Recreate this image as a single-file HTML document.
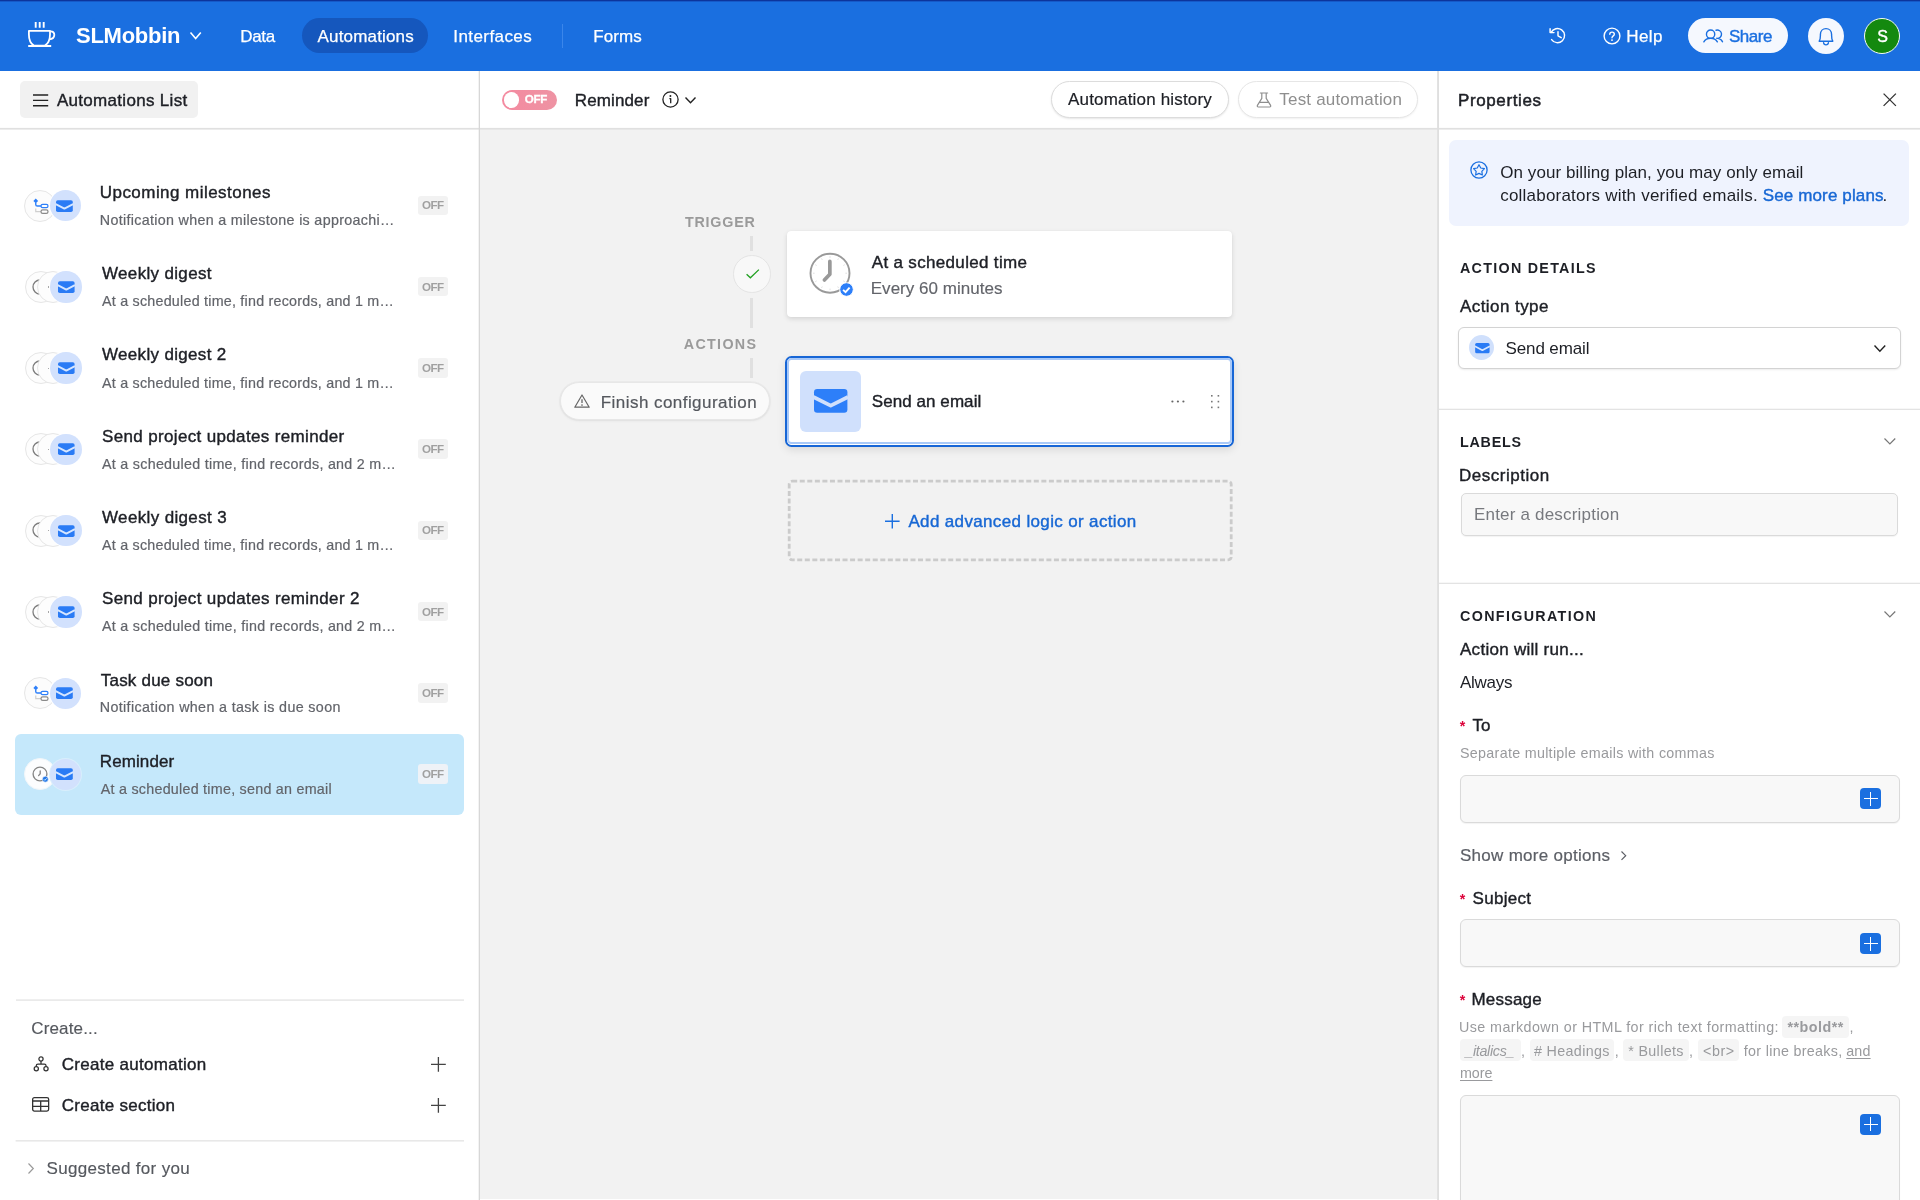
<!DOCTYPE html>
<html>
<head>
<meta charset="utf-8">
<title>Airtable - Automations</title>
<style>
*{box-sizing:border-box;margin:0;padding:0}
html,body{width:1920px;height:1200px;overflow:hidden;background:#fff}
body{font-family:"Liberation Sans",sans-serif;color:#1d1f25;position:relative;font-size:17px}
.a{position:absolute}
.t{position:absolute;white-space:nowrap;line-height:1}
svg{position:absolute;overflow:visible}
/* ===== top bar ===== */
#top{left:0;top:0;width:1920px;height:71px;background:#1a6fe0;border-top:1px solid #0c349c;box-shadow:inset 0 1px 0 #1559c8}
#tab-act{left:301.8px;top:17.8px;width:126.5px;height:35.4px;border-radius:18px;background:#1557bd}
#topdiv{left:562px;top:24px;width:1px;height:24px;background:#3b86ea}
#share{left:1687.6px;top:17.6px;width:100.5px;height:35.6px;border-radius:18px;background:#f5f8fe}
#bell{left:1808px;top:17.6px;width:36px;height:36px;border-radius:18px;background:#f5f8fe}
#avatar{left:1864px;top:17.6px;width:36px;height:36px;border-radius:18px;background:#14890f;border:1.8px solid #f4fbf4}
/* ===== sub bar ===== */
#sub{left:0;top:71px;width:1920px;height:59px;background:#fff}
#vl1{left:478px;top:71px;width:2px;height:1129px;background:#dedede}
#vl2{left:1437px;top:71px;width:2px;height:1129px;background:#dedede}
#listbtn{left:20px;top:81px;width:178px;height:37px;border-radius:5px;background:#f1f1f1}
#toggle{left:501.8px;top:89.8px;width:55.6px;height:20px;border-radius:10px;background:linear-gradient(90deg,#f48aa0,#ee93a3)}
#knob{left:503.9px;top:92px;width:15.6px;height:15.6px;border-radius:8px;background:#fff}
.pill{position:absolute;height:37px;border-radius:19px;background:#fff;border:1px solid #dcdcdc;box-shadow:0 1px 2px rgba(0,0,0,.10)}
/* ===== center ===== */
#center{left:480px;top:129px;width:957px;height:1070px;background:#f2f2f2}
/* ===== right ===== */
#right{left:1439px;top:129px;width:481px;height:1070px;background:#fff}
.hr{position:absolute;left:1439px;width:481px;height:1.4px;background:#e4e4e4}
.inp{position:absolute;background:#f8f8f8;border:1px solid #dadada;border-radius:5px;box-shadow:0 1px 1px rgba(0,0,0,.05)}
.plus{position:absolute;width:21px;height:21px;border-radius:4px;background:#1a6fe0}
.plus:before{content:"";position:absolute;left:9.9px;top:3.5px;width:1.2px;height:14px;background:#fff}
.plus:after{content:"";position:absolute;left:3.5px;top:9.9px;width:14px;height:1.2px;background:#fff}
.code{background:#f3f3f3;border-radius:4px;padding:3px 5px}
</style>
</head>
<body>
<!-- TOP BAR -->
<div class="a" id="top"></div>
<div class="a" id="tab-act"></div>
<div class="a" id="topdiv"></div>
<div class="a" id="share"></div>
<div class="a" id="bell"></div>
<div class="a" id="avatar"></div>
<!-- SUB BAR -->
<div class="a" id="sub"></div>
<div class="a" id="listbtn"></div>
<div class="a" id="toggle"></div>
<div class="a" id="knob"></div>
<div class="pill" style="left:1051px;top:81px;width:178px"></div>
<div class="pill" style="left:1238px;top:81px;width:180px;border-color:#e6e6e6;box-shadow:0 1px 2px rgba(0,0,0,.06)"></div>
<!-- CENTER -->
<div class="a" id="center"></div>
<!-- RIGHT -->
<div class="a" id="right"></div>
<svg style="left:0;top:0" width="1920" height="1200" viewBox="0 0 1920 1200">
<rect x="0" y="127.9" width="1920" height="1.7" fill="#e0e0e0"/>
<rect x="478.7" y="71" width="1.3" height="1129" fill="#d7d7d7"/>
<rect x="1437.1" y="71" width="1.9" height="1129" fill="#dfdfdf"/>
<rect x="1439" y="408.7" width="481" height="1.3" fill="#e3e3e3"/>
<rect x="1439" y="582.7" width="481" height="1.3" fill="#e3e3e3"/>
<rect x="16" y="999.3" width="448" height="1.6" fill="#e8e8e8"/>
<rect x="15.6" y="1140" width="448.4" height="1.6" fill="#e8e8e8"/>
</svg>
<div class="a" style="left:15px;top:734px;width:448.5px;height:81px;border-radius:6px;background:#c5e8fb"></div>
<div class="a" style="left:418px;top:195.70px;width:30px;height:19.5px;border-radius:3px;background:#f2f2f2"></div>
<div class="a" style="left:24.20px;top:189.60px;width:32px;height:32px;border-radius:50%;background:#fcfcfc;border:1.2px solid #e6e6e6"></div>
<svg style="left:33px;top:197.6px" width="16" height="16" viewBox="0 0 16 16"><path d="M2.75 0.5 L5.15 2.9 L2.75 5.3 L0.35 2.9 Z" fill="#2d7ff9"/><path d="M2.75 4.6 V6.4 Q2.75 8 4.4 8 H8" fill="none" stroke="#2d7ff9" stroke-width="1.4"/><rect x="8" y="6.3" width="7" height="3.4" rx="1.7" fill="#fff" stroke="#2d7ff9" stroke-width="1.2"/><path d="M2.75 10.4 V13.6 H8" fill="none" stroke="#cfcfcf" stroke-width="1.2"/><rect x="8" y="11.9" width="7" height="3.5" rx="1.7" fill="#fff" stroke="#8a8a8a" stroke-width="1.2"/></svg>
<div class="a" style="left:48.60px;top:188.90px;width:33.4px;height:33.4px;border-radius:50%;background:#fff;border:none"></div>
<div class="a" style="left:49.70px;top:190.00px;width:31.2px;height:31.2px;border-radius:50%;background:#d2e1fd;border:none"></div>
<svg style="left:56.2px;top:199.5px" width="16.8" height="12.3" viewBox="0 0 17 12"><rect x="0" y="0" width="17" height="12" rx="1.8" fill="#2a7bf5"/><path d="M-0.3 3.9 L8.5 8.5 L17.3 3.9" fill="none" stroke="#d6e6ff" stroke-width="1.95" stroke-linejoin="round"/></svg>
<div class="a" style="left:418px;top:276.95px;width:30px;height:19.5px;border-radius:3px;background:#f2f2f2"></div>
<div class="a" style="left:24.60px;top:270.85px;width:32px;height:32px;border-radius:50%;background:#fdfdfd;border:1.2px solid #e6e6e6"></div>
<svg style="left:32.4px;top:278.55px" width="16" height="16" viewBox="0 0 16 16"><circle cx="8" cy="8" r="7" fill="none" stroke="#7d7d7d" stroke-width="1.3"/></svg>
<div class="a" style="left:37.30px;top:270.85px;width:32px;height:32px;border-radius:50%;background:#fdfdfd;border:1.2px solid #e6e6e6"></div>
<div class="a" style="left:48px;top:286.25px;width:2px;height:1.4px;background:#a8a8a8"></div>
<div class="a" style="left:49.20px;top:270.05px;width:33.6px;height:33.6px;border-radius:50%;background:#fff;border:none"></div>
<div class="a" style="left:50.30px;top:271.15px;width:31.4px;height:31.4px;border-radius:50%;background:#d2e1fd;border:none"></div>
<svg style="left:57.6px;top:280.75px" width="16.6" height="12.3" viewBox="0 0 17 12"><rect x="0" y="0" width="17" height="12" rx="1.8" fill="#2a7bf5"/><path d="M-0.3 3.9 L8.5 8.5 L17.3 3.9" fill="none" stroke="#d6e6ff" stroke-width="1.95" stroke-linejoin="round"/></svg>
<div class="a" style="left:418px;top:358.20px;width:30px;height:19.5px;border-radius:3px;background:#f2f2f2"></div>
<div class="a" style="left:24.60px;top:352.10px;width:32px;height:32px;border-radius:50%;background:#fdfdfd;border:1.2px solid #e6e6e6"></div>
<svg style="left:32.4px;top:359.8px" width="16" height="16" viewBox="0 0 16 16"><circle cx="8" cy="8" r="7" fill="none" stroke="#7d7d7d" stroke-width="1.3"/></svg>
<div class="a" style="left:37.30px;top:352.10px;width:32px;height:32px;border-radius:50%;background:#fdfdfd;border:1.2px solid #e6e6e6"></div>
<div class="a" style="left:48px;top:367.50px;width:2px;height:1.4px;background:#a8a8a8"></div>
<div class="a" style="left:49.20px;top:351.30px;width:33.6px;height:33.6px;border-radius:50%;background:#fff;border:none"></div>
<div class="a" style="left:50.30px;top:352.40px;width:31.4px;height:31.4px;border-radius:50%;background:#d2e1fd;border:none"></div>
<svg style="left:57.6px;top:362px" width="16.6" height="12.3" viewBox="0 0 17 12"><rect x="0" y="0" width="17" height="12" rx="1.8" fill="#2a7bf5"/><path d="M-0.3 3.9 L8.5 8.5 L17.3 3.9" fill="none" stroke="#d6e6ff" stroke-width="1.95" stroke-linejoin="round"/></svg>
<div class="a" style="left:418px;top:439.45px;width:30px;height:19.5px;border-radius:3px;background:#f2f2f2"></div>
<div class="a" style="left:24.60px;top:433.35px;width:32px;height:32px;border-radius:50%;background:#fdfdfd;border:1.2px solid #e6e6e6"></div>
<svg style="left:32.4px;top:441.05px" width="16" height="16" viewBox="0 0 16 16"><circle cx="8" cy="8" r="7" fill="none" stroke="#7d7d7d" stroke-width="1.3"/></svg>
<div class="a" style="left:37.30px;top:433.35px;width:32px;height:32px;border-radius:50%;background:#fdfdfd;border:1.2px solid #e6e6e6"></div>
<div class="a" style="left:48px;top:448.75px;width:2px;height:1.4px;background:#a8a8a8"></div>
<div class="a" style="left:49.20px;top:432.55px;width:33.6px;height:33.6px;border-radius:50%;background:#fff;border:none"></div>
<div class="a" style="left:50.30px;top:433.65px;width:31.4px;height:31.4px;border-radius:50%;background:#d2e1fd;border:none"></div>
<svg style="left:57.6px;top:443.25px" width="16.6" height="12.3" viewBox="0 0 17 12"><rect x="0" y="0" width="17" height="12" rx="1.8" fill="#2a7bf5"/><path d="M-0.3 3.9 L8.5 8.5 L17.3 3.9" fill="none" stroke="#d6e6ff" stroke-width="1.95" stroke-linejoin="round"/></svg>
<div class="a" style="left:418px;top:520.70px;width:30px;height:19.5px;border-radius:3px;background:#f2f2f2"></div>
<div class="a" style="left:24.60px;top:514.60px;width:32px;height:32px;border-radius:50%;background:#fdfdfd;border:1.2px solid #e6e6e6"></div>
<svg style="left:32.4px;top:522.3px" width="16" height="16" viewBox="0 0 16 16"><circle cx="8" cy="8" r="7" fill="none" stroke="#7d7d7d" stroke-width="1.3"/></svg>
<div class="a" style="left:37.30px;top:514.60px;width:32px;height:32px;border-radius:50%;background:#fdfdfd;border:1.2px solid #e6e6e6"></div>
<div class="a" style="left:48px;top:530.00px;width:2px;height:1.4px;background:#a8a8a8"></div>
<div class="a" style="left:49.20px;top:513.80px;width:33.6px;height:33.6px;border-radius:50%;background:#fff;border:none"></div>
<div class="a" style="left:50.30px;top:514.90px;width:31.4px;height:31.4px;border-radius:50%;background:#d2e1fd;border:none"></div>
<svg style="left:57.6px;top:524.5px" width="16.6" height="12.3" viewBox="0 0 17 12"><rect x="0" y="0" width="17" height="12" rx="1.8" fill="#2a7bf5"/><path d="M-0.3 3.9 L8.5 8.5 L17.3 3.9" fill="none" stroke="#d6e6ff" stroke-width="1.95" stroke-linejoin="round"/></svg>
<div class="a" style="left:418px;top:601.95px;width:30px;height:19.5px;border-radius:3px;background:#f2f2f2"></div>
<div class="a" style="left:24.60px;top:595.85px;width:32px;height:32px;border-radius:50%;background:#fdfdfd;border:1.2px solid #e6e6e6"></div>
<svg style="left:32.4px;top:603.55px" width="16" height="16" viewBox="0 0 16 16"><circle cx="8" cy="8" r="7" fill="none" stroke="#7d7d7d" stroke-width="1.3"/></svg>
<div class="a" style="left:37.30px;top:595.85px;width:32px;height:32px;border-radius:50%;background:#fdfdfd;border:1.2px solid #e6e6e6"></div>
<div class="a" style="left:48px;top:611.25px;width:2px;height:1.4px;background:#a8a8a8"></div>
<div class="a" style="left:49.20px;top:595.05px;width:33.6px;height:33.6px;border-radius:50%;background:#fff;border:none"></div>
<div class="a" style="left:50.30px;top:596.15px;width:31.4px;height:31.4px;border-radius:50%;background:#d2e1fd;border:none"></div>
<svg style="left:57.6px;top:605.75px" width="16.6" height="12.3" viewBox="0 0 17 12"><rect x="0" y="0" width="17" height="12" rx="1.8" fill="#2a7bf5"/><path d="M-0.3 3.9 L8.5 8.5 L17.3 3.9" fill="none" stroke="#d6e6ff" stroke-width="1.95" stroke-linejoin="round"/></svg>
<div class="a" style="left:418px;top:683.20px;width:30px;height:19.5px;border-radius:3px;background:#f2f2f2"></div>
<div class="a" style="left:24.20px;top:677.10px;width:32px;height:32px;border-radius:50%;background:#fcfcfc;border:1.2px solid #e6e6e6"></div>
<svg style="left:33px;top:685.1px" width="16" height="16" viewBox="0 0 16 16"><path d="M2.75 0.5 L5.15 2.9 L2.75 5.3 L0.35 2.9 Z" fill="#2d7ff9"/><path d="M2.75 4.6 V6.4 Q2.75 8 4.4 8 H8" fill="none" stroke="#2d7ff9" stroke-width="1.4"/><rect x="8" y="6.3" width="7" height="3.4" rx="1.7" fill="#fff" stroke="#2d7ff9" stroke-width="1.2"/><path d="M2.75 10.4 V13.6 H8" fill="none" stroke="#cfcfcf" stroke-width="1.2"/><rect x="8" y="11.9" width="7" height="3.5" rx="1.7" fill="#fff" stroke="#8a8a8a" stroke-width="1.2"/></svg>
<div class="a" style="left:48.60px;top:676.40px;width:33.4px;height:33.4px;border-radius:50%;background:#fff;border:none"></div>
<div class="a" style="left:49.70px;top:677.50px;width:31.2px;height:31.2px;border-radius:50%;background:#d2e1fd;border:none"></div>
<svg style="left:56.2px;top:687px" width="16.8" height="12.3" viewBox="0 0 17 12"><rect x="0" y="0" width="17" height="12" rx="1.8" fill="#2a7bf5"/><path d="M-0.3 3.9 L8.5 8.5 L17.3 3.9" fill="none" stroke="#d6e6ff" stroke-width="1.95" stroke-linejoin="round"/></svg>
<div class="a" style="left:418px;top:764.45px;width:30px;height:19.5px;border-radius:3px;background:#eef2f7"></div>
<div class="a" style="left:24.20px;top:758.35px;width:32px;height:32px;border-radius:50%;background:#fcfdfe;border:1px solid #f1f6fa"></div>
<svg style="left:32.05px;top:766px" width="16" height="16" viewBox="0 0 16 16"><circle cx="8" cy="8" r="6.9" fill="none" stroke="#858585" stroke-width="1.35"/><path d="M8.2 5 V7.8 L6.6 9.6" fill="none" stroke="#858585" stroke-width="1.3" stroke-linecap="round" stroke-linejoin="round"/><circle cx="13.3" cy="13.2" r="3" fill="#2478e8" stroke="#fcfdfe" stroke-width="0.6"/><path d="M11.9 13.3 L12.9 14.3 L14.7 12.3" fill="none" stroke="#bfe6ff" stroke-width="1"/></svg>
<div class="a" style="left:48.60px;top:757.65px;width:33.4px;height:33.4px;border-radius:50%;background:#d9eefc;border:none"></div>
<div class="a" style="left:49.70px;top:758.75px;width:31.2px;height:31.2px;border-radius:50%;background:#d2e1fd;border:none"></div>
<svg style="left:56.2px;top:768.25px" width="16.8" height="12.3" viewBox="0 0 17 12"><rect x="0" y="0" width="17" height="12" rx="1.8" fill="#2a7bf5"/><path d="M-0.3 3.9 L8.5 8.5 L17.3 3.9" fill="none" stroke="#d6e6ff" stroke-width="1.95" stroke-linejoin="round"/></svg>
<svg style="left:430.7px;top:1057px" width="14.8" height="14.8" viewBox="0 0 14.8 14.8"><path d="M7.4 0 V14.8 M0 7.4 H14.8" stroke="#444" stroke-width="1.3" fill="none"/></svg>
<svg style="left:430.7px;top:1097.6px" width="14.8" height="14.8" viewBox="0 0 14.8 14.8"><path d="M7.4 0 V14.8 M0 7.4 H14.8" stroke="#444" stroke-width="1.3" fill="none"/></svg>
<svg style="left:32.5px;top:1056.3px" width="16" height="16" viewBox="0 0 16 16"><circle cx="8" cy="3" r="2.1" fill="none" stroke="#333" stroke-width="1.25"/><circle cx="3.3" cy="12.7" r="2.1" fill="none" stroke="#333" stroke-width="1.25"/><circle cx="13" cy="12.7" r="2.1" fill="none" stroke="#333" stroke-width="1.25"/><path d="M8 5.1 V8 M3.3 10.6 V9.6 Q3.3 8 4.9 8 H11.4 Q13 8 13 9.6 V10.6" fill="none" stroke="#333" stroke-width="1.25"/></svg>
<svg style="left:32px;top:1097.3px" width="17.5" height="15" viewBox="0 0 17.5 15"><rect x="0.65" y="0.65" width="16" height="13.4" rx="1.7" fill="none" stroke="#333" stroke-width="1.3"/><path d="M0.65 4 H16.65 M0.65 9.4 H16.65 M8.7 4 V14" fill="none" stroke="#333" stroke-width="1.3"/></svg>
<svg style="left:27.5px;top:1163px" width="6" height="11" viewBox="0 0 6 11"><path d="M0.5 0.5 L5.3 5.5 L0.5 10.5" fill="none" stroke="#9a9a9a" stroke-width="1.2"/></svg>
<div class="a" style="left:749.5px;top:235.75px;width:3.75px;height:15.5px;background:#e0e0e0"></div>
<div class="a" style="left:749.5px;top:297.5px;width:3.75px;height:30px;background:#e0e0e0"></div>
<div class="a" style="left:749.5px;top:358px;width:3.75px;height:20px;background:#e0e0e0"></div>
<div class="a" style="left:733px;top:255px;width:37.5px;height:37.5px;border-radius:50%;background:#f8f8f8;border:1.5px solid #e4e4e4"></div>
<svg style="left:745.5px;top:269.3px" width="13.5" height="9.6" viewBox="0 0 13.5 9.6"><path d="M0.6 5.2 L4.4 8.8 L12.9 0.6" fill="none" stroke="#20a020" stroke-width="1.3"/></svg>
<div class="a" style="left:787px;top:231.2px;width:445px;height:86.3px;border-radius:4px;background:#fff;box-shadow:0 2px 5px rgba(0,0,0,.12),0 0 1px rgba(0,0,0,.08)"></div>
<svg style="left:809.4px;top:251.8px" width="42" height="42" viewBox="0 0 42 42"><circle cx="21" cy="21.2" r="19.5" fill="#fff" stroke="#999" stroke-width="1.9"/><path d="M21.00 5.80 L21.00 4.20" stroke="#e0e0e0" stroke-width="1"/><path d="M28.70 7.86 L29.50 6.48" stroke="#e0e0e0" stroke-width="1"/><path d="M34.34 13.50 L35.72 12.70" stroke="#e0e0e0" stroke-width="1"/><path d="M36.40 21.20 L38.00 21.20" stroke="#e0e0e0" stroke-width="1"/><path d="M34.34 28.90 L35.72 29.70" stroke="#e0e0e0" stroke-width="1"/><path d="M28.70 34.54 L29.50 35.92" stroke="#e0e0e0" stroke-width="1"/><path d="M21.00 36.60 L21.00 38.20" stroke="#e0e0e0" stroke-width="1"/><path d="M13.30 34.54 L12.50 35.92" stroke="#e0e0e0" stroke-width="1"/><path d="M7.66 28.90 L6.28 29.70" stroke="#e0e0e0" stroke-width="1"/><path d="M5.60 21.20 L4.00 21.20" stroke="#e0e0e0" stroke-width="1"/><path d="M7.66 13.50 L6.28 12.70" stroke="#e0e0e0" stroke-width="1"/><path d="M13.30 7.86 L12.50 6.48" stroke="#e0e0e0" stroke-width="1"/><path d="M20.85 9.4 V22.2 L15.4 28" fill="none" stroke="#999" stroke-width="3.7" stroke-linecap="round" stroke-linejoin="round"/></svg>
<svg style="left:839.25px;top:282px" width="15" height="15" viewBox="0 0 15 15"><circle cx="7.5" cy="7.5" r="6.8" fill="#2d7ff9" stroke="#fff" stroke-width="1"/><path d="M4.1 7.9 L6.5 10.1 L10.6 5.6" fill="none" stroke="#fff" stroke-width="1.9"/></svg>
<div class="a" style="left:560px;top:382.4px;width:210px;height:37.4px;border-radius:19px;background:#fafafa;border:1.5px solid #e7e7e7;box-shadow:0 0 0 1px rgba(0,0,0,.025),0 1px 3px rgba(0,0,0,.06)"></div>
<svg style="left:574.2px;top:394.3px" width="16" height="14" viewBox="0 0 16 14"><path d="M8 1 L15.2 13.2 H0.8 Z" fill="none" stroke="#666" stroke-width="1.2" stroke-linejoin="round"/><path d="M8 5.2 V9" stroke="#666" stroke-width="1.3"/><circle cx="8" cy="11" r="0.85" fill="#666"/></svg>
<div class="a" style="left:784.9px;top:355.5px;width:449.4px;height:91.2px;border-radius:6.5px;background:#fff;border:2.4px solid #1766d6;box-shadow:0 3px 8px rgba(0,0,0,.10)"></div><div class="a" style="left:787.3px;top:357.9px;width:444.6px;height:86.4px;border-radius:4.2px;border:2px solid #a9c9f8"></div>
<div class="a" style="left:800px;top:370.7px;width:61px;height:61px;border-radius:6px;background:#d0e0fc"></div>
<svg style="left:813.7px;top:389.2px" width="33.4" height="23.8" viewBox="0 0 33.4 23.8"><rect x="0" y="0" width="33.4" height="23.8" rx="3.2" fill="#2d7ff9"/><path d="M-0.6 8 L16.7 16.6 L34 8" fill="none" stroke="#d0e0fc" stroke-width="3.8" stroke-linejoin="round"/></svg>
<svg style="left:1171px;top:400px" width="14" height="3" viewBox="0 0 14 3"><circle cx="1.4" cy="1.5" r="1.1" fill="#666"/><circle cx="6.9" cy="1.5" r="1.1" fill="#666"/><circle cx="12.4" cy="1.5" r="1.1" fill="#666"/></svg>
<svg style="left:1209.6px;top:394.2px" width="10" height="15" viewBox="0 0 10 15"><rect x="1" y="1" width="1.6" height="1.6" fill="#777"/><rect x="1" y="6.8" width="1.6" height="1.6" fill="#777"/><rect x="1" y="12.6" width="1.6" height="1.6" fill="#777"/><rect x="7.6" y="1" width="1.6" height="1.6" fill="#777"/><rect x="7.6" y="6.8" width="1.6" height="1.6" fill="#777"/><rect x="7.6" y="12.6" width="1.6" height="1.6" fill="#777"/></svg>
<svg style="left:787.5px;top:480.4px" width="444.5" height="81" viewBox="0 0 444.5 81"><rect x="1.2" y="1.2" width="442" height="78.6" rx="3" fill="none" stroke="#cbcbcb" stroke-width="2.8" stroke-dasharray="5 2.55"/></svg>
<svg style="left:885.3px;top:513.7px" width="14.6" height="14.6" viewBox="0 0 14.6 14.6"><path d="M7.3 0 V14.6 M0 7.3 H14.6" stroke="#1a6fe0" stroke-width="1.4" fill="none"/></svg>
<div class="a" style="left:1449px;top:140px;width:460.4px;height:85.7px;border-radius:7px;background:#eff3fe"></div>
<svg style="left:1470.4px;top:161px" width="18" height="18" viewBox="0 0 18 18"><circle cx="9" cy="9" r="8.1" fill="none" stroke="#1a6fe0" stroke-width="1.3"/><path d="M9.00 3.70 L10.76 6.97 L14.42 7.64 L11.85 10.33 L12.35 14.01 L9.00 12.40 L5.65 14.01 L6.15 10.33 L3.58 7.64 L7.24 6.97 Z" fill="none" stroke="#1a6fe0" stroke-width="1.2" stroke-linejoin="round"/></svg>
<div class="a" style="left:1458px;top:326.8px;width:442.7px;height:42.5px;border-radius:6px;background:#fff;border:1px solid #d3d3d3;box-shadow:0 1px 2px rgba(0,0,0,.08)"></div>
<div class="a" style="left:1469.25px;top:335px;width:25px;height:25px;border-radius:50%;background:#d0e0fc"></div>
<svg style="left:1474.5px;top:342.5px" width="14.75" height="10.2" viewBox="0 0 17 12"><rect x="0" y="0" width="17" height="12" rx="1.8" fill="#2a7bf5"/><path d="M-0.3 3.9 L8.5 8.5 L17.3 3.9" fill="none" stroke="#d6e6ff" stroke-width="1.95" stroke-linejoin="round"/></svg>
<svg style="left:1873.75px;top:344.6px" width="11.75" height="6.8" viewBox="0 0 11.75 6.8"><path d="M0.5 0.5 L5.875 6.3 L11.25 0.5" fill="none" stroke="#222" stroke-width="1.4"/></svg>
<svg style="left:1883.75px;top:437.6px" width="11.75" height="6.5" viewBox="0 0 11.75 6.5"><path d="M0.5 0.5 L5.875 6 L11.25 0.5" fill="none" stroke="#777" stroke-width="1.2"/></svg>
<div class="inp" style="left:1460.75px;top:493px;width:437.3px;height:42.5px"></div>
<svg style="left:1883.75px;top:611.4px" width="11.75" height="6.5" viewBox="0 0 11.75 6.5"><path d="M0.5 0.5 L5.875 6 L11.25 0.5" fill="none" stroke="#777" stroke-width="1.2"/></svg>
<div class="inp" style="left:1459.5px;top:775px;width:440px;height:47.5px;border-radius:6px"></div>
<div class="plus" style="left:1860px;top:788.2px"></div>
<svg style="left:1620.5px;top:851.3px" width="5.5" height="9.4" viewBox="0 0 5.5 9.4"><path d="M0.5 0.5 L4.7 4.7 L0.5 8.9" fill="none" stroke="#5c5f66" stroke-width="1.2"/></svg>
<div class="inp" style="left:1459.5px;top:919.4px;width:440px;height:47.7px;border-radius:6px"></div>
<div class="plus" style="left:1860px;top:933.2px"></div>
<div class="inp" style="left:1459.5px;top:1095px;width:440px;height:140px;border-radius:6px"></div>
<div class="plus" style="left:1860px;top:1113.7px"></div>
<div class="a" style="left:1782px;top:1016.25px;width:67.25px;height:22px;border-radius:4px;background:#f5f5f5"></div>
<div class="a" style="left:1459.5px;top:1039.25px;width:61px;height:22px;border-radius:4px;background:#f5f5f5"></div>
<div class="a" style="left:1529.5px;top:1039.25px;width:84.75px;height:22px;border-radius:4px;background:#f5f5f5"></div>
<div class="a" style="left:1623.25px;top:1039.25px;width:65.5px;height:22px;border-radius:4px;background:#f5f5f5"></div>
<div class="a" style="left:1697.5px;top:1039.25px;width:41.25px;height:22px;border-radius:4px;background:#f5f5f5"></div>
<div class="a" style="left:0;top:0;width:1920px;height:1200px;will-change:transform">
<div class="t" style="left:76.00px;top:25.00px;font-size:22px;font-weight:700;color:#fff;letter-spacing:-0.268px;">SLMobbin</div>
<div class="t" style="left:240.25px;top:28.00px;font-size:17px;font-weight:400;color:#fff;letter-spacing:-0.322px;-webkit-text-stroke:0.25px;">Data</div>
<div class="t" style="left:317.50px;top:28.00px;font-size:17px;font-weight:400;color:#fff;letter-spacing:0.175px;-webkit-text-stroke:0.25px;">Automations</div>
<div class="t" style="left:453.25px;top:28.00px;font-size:17px;font-weight:400;color:#fff;letter-spacing:0.427px;-webkit-text-stroke:0.25px;">Interfaces</div>
<div class="t" style="left:593.25px;top:28.00px;font-size:17px;font-weight:400;color:#fff;letter-spacing:0.082px;-webkit-text-stroke:0.25px;">Forms</div>
<div class="t" style="left:1626.30px;top:28.00px;font-size:17px;font-weight:400;color:#fff;letter-spacing:0.395px;-webkit-text-stroke:0.25px;">Help</div>
<div class="t" style="left:1729.00px;top:28.00px;font-size:17px;font-weight:400;color:#1a6fe0;letter-spacing:-0.480px;-webkit-text-stroke:0.4px;">Share</div>
<div class="t" style="left:1877.30px;top:29.00px;font-size:16px;font-weight:400;color:#fff;letter-spacing:-0.800px;-webkit-text-stroke:0.4px;">S</div>
<div class="t" style="left:56.90px;top:92.00px;font-size:17px;font-weight:400;color:#1d1f25;letter-spacing:0.309px;-webkit-text-stroke:0.4px;">Automations List</div>
<div class="t" style="left:524.70px;top:93.00px;font-size:11.6px;font-weight:700;color:#fff;letter-spacing:-0.303px;-webkit-text-stroke:0.3px;">OFF</div>
<div class="t" style="left:574.80px;top:92.00px;font-size:17px;font-weight:400;color:#1d1f25;letter-spacing:0.123px;-webkit-text-stroke:0.4px;">Reminder</div>
<div class="t" style="left:1068.00px;top:91.00px;font-size:17px;font-weight:400;color:#1d1f25;letter-spacing:0.177px;-webkit-text-stroke:0.2px;">Automation history</div>
<div class="t" style="left:1279.30px;top:91.00px;font-size:17px;font-weight:400;color:#8e8e8e;letter-spacing:0.188px;">Test automation</div>
<div class="t" style="left:1458.00px;top:92.00px;font-size:17px;font-weight:400;color:#1d1f25;letter-spacing:0.613px;-webkit-text-stroke:0.5px;">Properties</div>
<div class="t" style="left:685.00px;top:215.00px;font-size:14.3px;font-weight:700;color:#9a9a9a;letter-spacing:0.781px;">TRIGGER</div>
<div class="t" style="left:683.75px;top:337.00px;font-size:14.3px;font-weight:700;color:#9a9a9a;letter-spacing:1.324px;">ACTIONS</div>
<div class="t" style="left:871.75px;top:254.00px;font-size:17px;font-weight:400;color:#1d1f25;letter-spacing:0.327px;-webkit-text-stroke:0.4px;">At a scheduled time</div>
<div class="t" style="left:870.75px;top:280.00px;font-size:17px;font-weight:400;color:#62646a;letter-spacing:0.027px;-webkit-text-stroke:0.15px;">Every 60 minutes</div>
<div class="t" style="left:600.75px;top:394.00px;font-size:17px;font-weight:400;color:#55585e;letter-spacing:0.449px;-webkit-text-stroke:0.2px;">Finish configuration</div>
<div class="t" style="left:871.75px;top:393.00px;font-size:17px;font-weight:400;color:#1d1f25;letter-spacing:0.070px;-webkit-text-stroke:0.4px;">Send an email</div>
<div class="t" style="left:908.40px;top:513.00px;font-size:17px;font-weight:400;color:#1767d4;letter-spacing:0.352px;-webkit-text-stroke:0.4px;">Add advanced logic or action</div>
<div class="t" style="left:1500.25px;top:164.00px;font-size:17px;font-weight:400;color:#1d1f25;letter-spacing:0.065px;">On your billing plan, you may only email</div>
<div class="t" style="left:1500.25px;top:187.00px;font-size:17px;font-weight:400;color:#1d1f25;letter-spacing:0.208px;">collaborators with verified emails.</div>
<div class="t" style="left:1762.75px;top:187.00px;font-size:17px;font-weight:400;color:#1767d4;letter-spacing:0.129px;-webkit-text-stroke:0.4px;">See more plans</div>
<div class="t" style="left:1882.60px;top:187.00px;font-size:17px;font-weight:400;color:#1d1f25;">.</div>
<div class="t" style="left:1460.00px;top:261.00px;font-size:14.3px;font-weight:700;color:#1d1f25;letter-spacing:1.282px;">ACTION DETAILS</div>
<div class="t" style="left:1460.00px;top:298.00px;font-size:17px;font-weight:400;color:#1d1f25;letter-spacing:0.435px;-webkit-text-stroke:0.4px;">Action type</div>
<div class="t" style="left:1505.50px;top:340.00px;font-size:17px;font-weight:400;color:#1d1f25;letter-spacing:-0.115px;">Send email</div>
<div class="t" style="left:1460.00px;top:435.00px;font-size:14.3px;font-weight:700;color:#1d1f25;letter-spacing:0.767px;">LABELS</div>
<div class="t" style="left:1459.00px;top:467.00px;font-size:17px;font-weight:400;color:#1d1f25;letter-spacing:0.516px;-webkit-text-stroke:0.4px;">Description</div>
<div class="t" style="left:1474.00px;top:506.00px;font-size:17px;font-weight:400;color:#77797e;letter-spacing:0.192px;">Enter a description</div>
<div class="t" style="left:1460.00px;top:609.00px;font-size:14.3px;font-weight:700;color:#1d1f25;letter-spacing:1.346px;">CONFIGURATION</div>
<div class="t" style="left:1460.00px;top:641.00px;font-size:17px;font-weight:400;color:#1d1f25;letter-spacing:0.275px;-webkit-text-stroke:0.4px;">Action will run...</div>
<div class="t" style="left:1460.00px;top:674.00px;font-size:17px;font-weight:400;color:#1d1f25;letter-spacing:-0.272px;">Always</div>
<div class="t" style="left:1459.80px;top:719.00px;font-size:14.3px;font-weight:700;color:#dc043b;">*</div>
<div class="t" style="left:1472.50px;top:717.00px;font-size:17px;font-weight:400;color:#1d1f25;letter-spacing:-0.014px;-webkit-text-stroke:0.4px;">To</div>
<div class="t" style="left:1460.00px;top:746.00px;font-size:14.3px;font-weight:400;color:#999a9d;letter-spacing:0.299px;">Separate multiple emails with commas</div>
<div class="t" style="left:1460.00px;top:847.00px;font-size:17px;font-weight:400;color:#5c5f66;letter-spacing:0.279px;-webkit-text-stroke:0.2px;">Show more options</div>
<div class="t" style="left:1459.80px;top:892.00px;font-size:14.3px;font-weight:700;color:#dc043b;">*</div>
<div class="t" style="left:1472.50px;top:890.00px;font-size:17px;font-weight:400;color:#1d1f25;letter-spacing:0.295px;-webkit-text-stroke:0.4px;">Subject</div>
<div class="t" style="left:1459.80px;top:993.00px;font-size:14.3px;font-weight:700;color:#dc043b;">*</div>
<div class="t" style="left:1471.50px;top:991.00px;font-size:17px;font-weight:400;color:#1d1f25;letter-spacing:0.203px;-webkit-text-stroke:0.4px;">Message</div>
<div class="t" style="left:1459.00px;top:1020.00px;font-size:14.3px;font-weight:400;color:#999a9d;letter-spacing:0.420px;">Use markdown or HTML for rich text formatting:</div>
<div class="t" style="left:1787.50px;top:1020.00px;font-size:14.3px;font-weight:700;color:#999a9d;letter-spacing:0.482px;">**bold**</div>
<div class="t" style="left:1849.50px;top:1020.00px;font-size:14.3px;font-weight:400;color:#999a9d;">,</div>
<div class="t" style="left:1465.25px;top:1044.00px;font-size:14.3px;font-weight:400;color:#999a9d;letter-spacing:-0.307px;font-style:italic;">_italics_</div>
<div class="t" style="left:1521.00px;top:1044.00px;font-size:14.3px;font-weight:400;color:#999a9d;">,</div>
<div class="t" style="left:1534.00px;top:1044.00px;font-size:14.3px;font-weight:400;color:#999a9d;letter-spacing:0.339px;"># Headings</div>
<div class="t" style="left:1614.75px;top:1044.00px;font-size:14.3px;font-weight:400;color:#999a9d;">,</div>
<div class="t" style="left:1628.25px;top:1044.00px;font-size:14.3px;font-weight:400;color:#999a9d;letter-spacing:0.337px;">* Bullets</div>
<div class="t" style="left:1689.00px;top:1044.00px;font-size:14.3px;font-weight:400;color:#999a9d;">,</div>
<div class="t" style="left:1703.00px;top:1044.00px;font-size:14.3px;font-weight:400;color:#999a9d;letter-spacing:0.559px;">&lt;br&gt;</div>
<div class="t" style="left:1743.75px;top:1044.00px;font-size:14.3px;font-weight:400;color:#999a9d;letter-spacing:0.313px;">for line breaks,</div>
<div class="t" style="left:1846.25px;top:1044.00px;font-size:14.3px;font-weight:400;color:#999a9d;letter-spacing:0.171px;text-decoration:underline;text-underline-offset:2px;">and</div>
<div class="t" style="left:1460.00px;top:1066.00px;font-size:14.3px;font-weight:400;color:#999a9d;letter-spacing:-0.042px;text-decoration:underline;text-underline-offset:2px;">more</div>
<div class="t" style="left:31.25px;top:1020.00px;font-size:17px;font-weight:400;color:#55585e;letter-spacing:0.159px;-webkit-text-stroke:0.15px;">Create...</div>
<div class="t" style="left:61.75px;top:1056.00px;font-size:17px;font-weight:400;color:#1d1f25;letter-spacing:0.286px;-webkit-text-stroke:0.4px;">Create automation</div>
<div class="t" style="left:61.75px;top:1097.00px;font-size:17px;font-weight:400;color:#1d1f25;letter-spacing:0.275px;-webkit-text-stroke:0.4px;">Create section</div>
<div class="t" style="left:46.50px;top:1160.00px;font-size:17px;font-weight:400;color:#55585e;letter-spacing:0.326px;-webkit-text-stroke:0.15px;">Suggested for you</div>
<div class="t" style="left:99.75px;top:184.00px;font-size:17px;font-weight:400;color:#1d1f25;letter-spacing:0.457px;-webkit-text-stroke:0.4px;">Upcoming milestones</div>
<div class="t" style="left:99.75px;top:213.00px;font-size:14.3px;font-weight:400;color:#62646a;letter-spacing:0.315px;-webkit-text-stroke:0.2px;">Notification when a milestone is approachi…</div>
<div class="t" style="left:422.00px;top:199.00px;font-size:11.6px;font-weight:700;color:#a0a0a0;letter-spacing:-0.553px;">OFF</div>
<div class="t" style="left:102.00px;top:265.00px;font-size:17px;font-weight:400;color:#1d1f25;letter-spacing:0.330px;-webkit-text-stroke:0.4px;">Weekly digest</div>
<div class="t" style="left:102.00px;top:294.00px;font-size:14.3px;font-weight:400;color:#62646a;letter-spacing:0.231px;-webkit-text-stroke:0.2px;">At a scheduled time, find records, and 1 m…</div>
<div class="t" style="left:422.00px;top:281.00px;font-size:11.6px;font-weight:700;color:#a0a0a0;letter-spacing:-0.553px;">OFF</div>
<div class="t" style="left:102.00px;top:346.00px;font-size:17px;font-weight:400;color:#1d1f25;letter-spacing:0.325px;-webkit-text-stroke:0.4px;">Weekly digest 2</div>
<div class="t" style="left:102.00px;top:376.00px;font-size:14.3px;font-weight:400;color:#62646a;letter-spacing:0.231px;-webkit-text-stroke:0.2px;">At a scheduled time, find records, and 1 m…</div>
<div class="t" style="left:422.00px;top:362.00px;font-size:11.6px;font-weight:700;color:#a0a0a0;letter-spacing:-0.553px;">OFF</div>
<div class="t" style="left:102.00px;top:428.00px;font-size:17px;font-weight:400;color:#1d1f25;letter-spacing:0.349px;-webkit-text-stroke:0.4px;">Send project updates reminder</div>
<div class="t" style="left:102.00px;top:457.00px;font-size:14.3px;font-weight:400;color:#62646a;letter-spacing:0.278px;-webkit-text-stroke:0.2px;">At a scheduled time, find records, and 2 m…</div>
<div class="t" style="left:422.00px;top:443.00px;font-size:11.6px;font-weight:700;color:#a0a0a0;letter-spacing:-0.553px;">OFF</div>
<div class="t" style="left:102.00px;top:509.00px;font-size:17px;font-weight:400;color:#1d1f25;letter-spacing:0.354px;-webkit-text-stroke:0.4px;">Weekly digest 3</div>
<div class="t" style="left:102.00px;top:538.00px;font-size:14.3px;font-weight:400;color:#62646a;letter-spacing:0.231px;-webkit-text-stroke:0.2px;">At a scheduled time, find records, and 1 m…</div>
<div class="t" style="left:422.00px;top:524.00px;font-size:11.6px;font-weight:700;color:#a0a0a0;letter-spacing:-0.553px;">OFF</div>
<div class="t" style="left:102.00px;top:590.00px;font-size:17px;font-weight:400;color:#1d1f25;letter-spacing:0.360px;-webkit-text-stroke:0.4px;">Send project updates reminder 2</div>
<div class="t" style="left:102.00px;top:619.00px;font-size:14.3px;font-weight:400;color:#62646a;letter-spacing:0.278px;-webkit-text-stroke:0.2px;">At a scheduled time, find records, and 2 m…</div>
<div class="t" style="left:422.00px;top:606.00px;font-size:11.6px;font-weight:700;color:#a0a0a0;letter-spacing:-0.553px;">OFF</div>
<div class="t" style="left:100.75px;top:672.00px;font-size:17px;font-weight:400;color:#1d1f25;letter-spacing:0.214px;-webkit-text-stroke:0.4px;">Task due soon</div>
<div class="t" style="left:99.75px;top:700.00px;font-size:14.3px;font-weight:400;color:#62646a;letter-spacing:0.360px;-webkit-text-stroke:0.2px;">Notification when a task is due soon</div>
<div class="t" style="left:422.00px;top:687.00px;font-size:11.6px;font-weight:700;color:#a0a0a0;letter-spacing:-0.553px;">OFF</div>
<div class="t" style="left:99.75px;top:753.00px;font-size:17px;font-weight:400;color:#1d1f25;letter-spacing:0.101px;-webkit-text-stroke:0.4px;">Reminder</div>
<div class="t" style="left:100.75px;top:782.00px;font-size:14.3px;font-weight:400;color:#62646a;letter-spacing:0.254px;-webkit-text-stroke:0.2px;">At a scheduled time, send an email</div>
<div class="t" style="left:422.00px;top:768.00px;font-size:11.6px;font-weight:700;color:#a0a0a0;letter-spacing:-0.553px;">OFF</div>
</div>
<svg style="left:27px;top:21px" width="30" height="27" viewBox="0 0 30 27"><path d="M8.7 1.1 V6.8 M12.7 1.1 V6.8 M16.7 1.1 V6.8" stroke="#fff" stroke-width="1.9" fill="none"/><path d="M1.9 9.9 H23 V13.6 C23 19 21.4 22.6 17.9 24.6 H6.9 C3.4 22.6 1.9 19 1.9 13.6 Z" fill="none" stroke="#fff" stroke-width="1.8" stroke-linejoin="round"/><path d="M23.3 10.3 C28.6 9.8 29 17.7 22.4 18.4" fill="none" stroke="#fff" stroke-width="1.8"/><path d="M1.2 25 H24.2" stroke="#fff" stroke-width="2" fill="none"/></svg>
<svg style="left:189.5px;top:32.2px" width="11.3" height="7" viewBox="0 0 11.3 7"><path d="M0.5 0.5 L5.65 6.5 L10.8 0.5" fill="none" stroke="#fff" stroke-width="1.6"/></svg>
<svg style="left:1548px;top:26px" width="20" height="20" viewBox="0 0 20 20"><path d="M3.1 6.4 A7.1 7.1 0 1 1 3.6 13.6" fill="none" stroke="#fff" stroke-width="1.45" stroke-linecap="round"/><path d="M2.1 2.7 V6.6 H6" fill="none" stroke="#fff" stroke-width="1.45" stroke-linecap="round" stroke-linejoin="round"/><path d="M10 5.8 V9.8 L13.2 11.7" fill="none" stroke="#fff" stroke-width="1.45" stroke-linecap="round" stroke-linejoin="round"/></svg>
<svg style="left:1602.5px;top:27px" width="18" height="18" viewBox="0 0 18 18"><circle cx="9" cy="9" r="7.9" fill="none" stroke="#fff" stroke-width="1.4"/><path d="M6.8 7.2 C6.8 4.4 11.3 4.4 11.3 7.2 C11.3 8.9 9 8.8 9 10.8" fill="none" stroke="#fff" stroke-width="1.4" stroke-linecap="round"/><circle cx="9" cy="13.1" r="0.95" fill="#fff"/></svg>
<svg style="left:1703px;top:27.5px" width="20" height="16" viewBox="0 0 20 16"><circle cx="7.6" cy="6.2" r="4.15" fill="none" stroke="#1a6fe0" stroke-width="1.4"/><path d="M0.85 13.8 C2.3 11.3 4.8 10.3 7.6 10.3 C10.4 10.3 12.9 11.3 14.35 13.8" fill="none" stroke="#1a6fe0" stroke-width="1.4" stroke-linecap="round"/><path d="M13.06 2.25 A4.15 4.15 0 1 1 13.8 10.3 M15 10.35 C17 10.6 18.6 11.8 19.5 13.8" fill="none" stroke="#1a6fe0" stroke-width="1.4" stroke-linecap="round"/></svg>
<svg style="left:1817px;top:26.5px" width="18" height="20" viewBox="0 0 18 20"><path d="M2.2 14.2 C3.6 12.2 3.4 10.4 3.4 7.6 C3.4 3.8 5.9 1.6 9 1.6 C12.1 1.6 14.6 3.8 14.6 7.6 C14.6 10.4 14.4 12.2 15.8 14.2 Z" fill="none" stroke="#1a6fe0" stroke-width="1.4" stroke-linejoin="round"/><path d="M6.6 15.8 C6.9 18.6 11.1 18.6 11.4 15.8" fill="none" stroke="#1a6fe0" stroke-width="1.4" stroke-linecap="round"/></svg>
<svg style="left:33px;top:93.5px" width="15.5" height="13" viewBox="0 0 15.5 13"><path d="M0 1 H15.2 M0 6.4 H15.2 M0 11.8 H15.2" stroke="#222" stroke-width="1.4" fill="none"/></svg>
<svg style="left:661.8px;top:91.3px" width="17" height="17" viewBox="0 0 17 17"><circle cx="8.5" cy="8.5" r="7.6" fill="none" stroke="#222" stroke-width="1.3"/><path d="M7.4 7.6 H8.7 V12.2" fill="none" stroke="#222" stroke-width="1.3" stroke-linejoin="round"/><circle cx="8.4" cy="5" r="0.95" fill="#222"/></svg>
<svg style="left:685.3px;top:97px" width="11" height="6.3" viewBox="0 0 11 6.3"><path d="M0.5 0.5 L5.5 5.8 L10.5 0.5" fill="none" stroke="#222" stroke-width="1.4"/></svg>
<svg style="left:1255.5px;top:92px" width="16" height="16" viewBox="0 0 16 16"><path d="M5.8 1 V6.4 L1.4 13.4 C1 14.2 1.4 15 2.4 15 H13.6 C14.6 15 15 14.2 14.6 13.4 L10.2 6.4 V1 M4.4 1 H11.6 M3.4 10.4 H12.6" fill="none" stroke="#8e8e8e" stroke-width="1.2" stroke-linejoin="round" stroke-linecap="round"/></svg>
<svg style="left:1883px;top:93px" width="13.5" height="13.5" viewBox="0 0 13.5 13.5"><path d="M0.6 0.6 L12.9 12.9 M12.9 0.6 L0.6 12.9" stroke="#333" stroke-width="1.3" fill="none"/></svg>
</body>
</html>
